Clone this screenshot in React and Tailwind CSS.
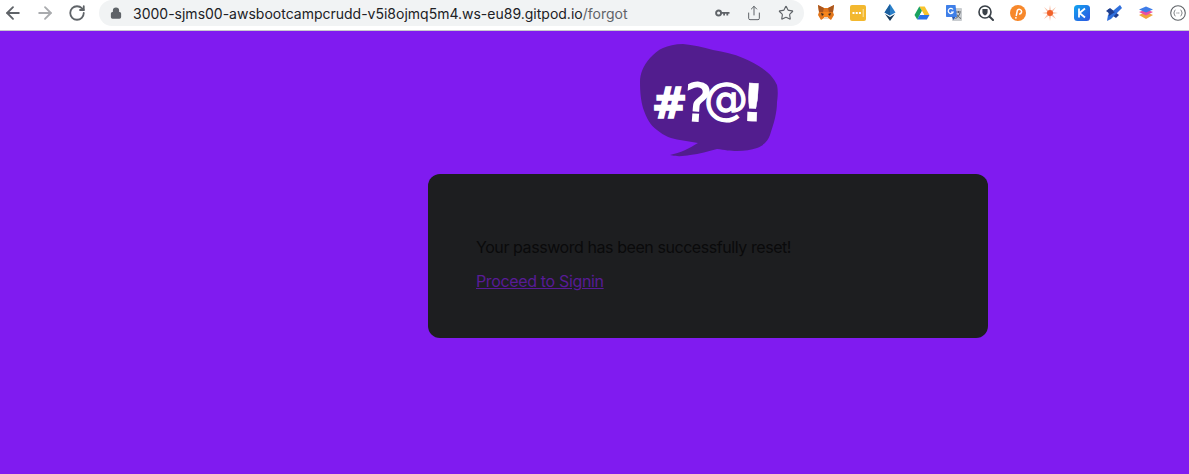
import { ArrowLeft, ArrowRight, RotateCw, Lock, Share, Star } from "lucide-react";

function Logo() {
  const glyph = "font-['DejaVu_Sans',sans-serif] fill-white stroke-white";
  return (
    <svg width="140" height="116" viewBox="0 0 140 116" className="ml-[4px]">
      <path
        d="M10 15 C3 23 0 31 0 39 C0 50 1 58 3 65 C7 76 10 82 17 87 C24 93 32 96 40 97 L58 100 C50 105 40 110 30 112 C38 114 44 113 50 112 C60 111 68 108 77 106 C85 107 90 108 97 108 C105 108 111 107 117 105 C124 102 128 98 130 92 C134 80 137 70 137 59 C138 52 138 47 137 42 C134 36 131 32 127 29 C120 23 112 19 103 15 C94 11 84 9 73 7 C63 4 53 2 43 1 C35 1 28 3 23 5 C18 7 14 11 10 15 Z"
        fill="#521d8e"
      />
      <text x="12" y="75" fontSize="42" fontWeight="700" strokeWidth="1.6" className={glyph}>#</text>
      <text x="44" y="78" fontSize="52" strokeWidth="1.6" className={glyph} transform="rotate(4 58 58)">?</text>
      <text x="64" y="71" fontSize="44" strokeWidth="1.2" className={glyph}>@</text>
      <text x="101" y="78" fontSize="52" fontWeight="700" strokeWidth="0.4" className={glyph} transform="rotate(3 112 57)">!</text>
    </svg>
  );
}

function KeyIcon() {
  return (
    <svg width="15" height="8" viewBox="0 0 15 8" fill="none">
      <circle cx="3.6" cy="4" r="2.5" stroke="#5f6368" strokeWidth="1.9" />
      <path d="M6 2.9H14.5V4.8H13.2V6.4H11.4V4.8H10V6.4H8.2V4.8H6Z" fill="#5f6368" />
    </svg>
  );
}

function Fox() {
  return (
    <svg width="18" height="17" viewBox="0 0 18 17">
      <path d="M1 1L7 4H11L17 1L16 8L17 11L14 16L11 14H7L4 16L1 11L2 8Z" fill="#e2761b" />
      <path d="M1 1L7 4L6 8L2 8Z" fill="#a9561f" />
      <path d="M17 1L11 4L12 8L16 8Z" fill="#a9561f" />
      <path d="M6 8H12L11 14H7Z" fill="#f6851b" />
      <path d="M7 13H11V15H7Z" fill="#e8d9c9" />
      <path d="M4 9L7 10L5 12Z M14 9L11 10L13 12Z" fill="#3b2a20" />
    </svg>
  );
}

function Dots() {
  return (
    <svg width="16" height="16" viewBox="0 0 16 16">
      <rect width="16" height="16" rx="2" fill="#f3b82f" />
      <rect x="2.5" y="7" width="2" height="2" fill="#fff" />
      <rect x="5.7" y="7" width="2" height="2" fill="#fff" />
      <rect x="8.9" y="7" width="2" height="2" fill="#fff" />
      <rect x="12.7" y="4" width="1" height="8" fill="#fbe3a5" />
    </svg>
  );
}

function Eth() {
  return (
    <svg width="12" height="17" viewBox="0 0 12 17">
      <path d="M6 0L11.5 8.5L6 11.5L0.5 8.5Z" fill="#2a7fc9" />
      <path d="M6 0V11.5L0.5 8.5Z" fill="#1c5f9e" />
      <path d="M1 10L6 13L11 10L6 17Z" fill="#173a5c" />
    </svg>
  );
}

function Drive() {
  return (
    <svg width="16" height="14" viewBox="0 0 16 14">
      <path d="M5.3 0.5H10.7L15.5 9H10.2Z" fill="#f8c32c" />
      <path d="M5.3 0.5L0.5 9L3.2 13.5L8 5Z" fill="#1aa260" />
      <path d="M3.2 13.5H12.8L15.5 9H5.8Z" fill="#2a71e8" />
      <path d="M8 5L10.2 9H5.8Z" fill="#fff" />
    </svg>
  );
}

function Translate() {
  return (
    <svg width="16" height="16" viewBox="0 0 16 16">
      <rect x="6" y="3" width="10" height="13" rx="1" fill="#c9ccd0" />
      <path d="M10 7H15M12.5 6V8M14 8C13 11 11.5 12.5 9.5 13.5M11 9.5C12 11.5 13 12.5 15 13.5" stroke="#5f6368" strokeWidth="1" fill="none" />
      <path d="M1 0H9.5L11 12H1C0.4 12 0 11.6 0 11V1C0 0.4 0.4 0 1 0Z" fill="#3f7fe8" />
      <path d="M7 4.5A2.6 2.6 0 1 0 7.2 7H5" stroke="#fff" strokeWidth="1.2" fill="none" />
      <path d="M6 12H9.5L7.5 15Z" fill="#2b58b0" />
    </svg>
  );
}

function ShieldSearch() {
  return (
    <svg width="16" height="16" viewBox="0 0 16 16" fill="none">
      <circle cx="7" cy="7" r="6" stroke="#3a4148" strokeWidth="1.6" />
      <path d="M4.4 4H9.6V7C9.6 8.8 8.2 10 7 10.6C5.8 10 4.4 8.8 4.4 7Z" fill="#3a4148" />
      <path d="M11.5 11.5L15 15" stroke="#3a4148" strokeWidth="2" strokeLinecap="round" />
    </svg>
  );
}

function Polka() {
  return (
    <svg width="16" height="16" viewBox="0 0 16 16" fill="none">
      <circle cx="8" cy="8" r="8" fill="#f7882b" />
      <path d="M6.2 11L7.3 5.5A2.3 2.3 0 1 1 9 9" stroke="#fff" strokeWidth="1.5" />
      <circle cx="5.9" cy="12.8" r="0.9" fill="#fff" />
    </svg>
  );
}

function Spark() {
  return (
    <svg width="16" height="16" viewBox="0 0 16 16">
      <path d="M8 0L9 6L14 2L10.5 7L16 8L10.5 9L14 14L9 10.5L8 16L7 10.5L2 14L5.5 9L0 8L5.5 7L2 2L7 6Z" fill="#f9bfa8" />
      <circle cx="8" cy="8" r="3" fill="#f2622a" />
    </svg>
  );
}

function KBadge() {
  return (
    <svg width="16" height="16" viewBox="0 0 16 16">
      <defs>
        <linearGradient id="kb" x1="0" y1="0" x2="1" y2="1">
          <stop offset="0" stopColor="#12a4f0" />
          <stop offset="1" stopColor="#2c55e0" />
        </linearGradient>
      </defs>
      <rect width="16" height="16" rx="3.5" fill="url(#kb)" />
      <path d="M5 3.5V12.5M11 3.5L5.5 8L11 12.5" stroke="#fff" strokeWidth="1.8" fill="none" />
    </svg>
  );
}

function Cross() {
  return (
    <svg width="16" height="16" viewBox="0 0 16 16">
      <path d="M0 6L4 3L13 10L10 13Z" fill="#1f3f8f" />
      <path d="M14 0L16 3L5 14L1 16L2 10Z" fill="#2f6fdc" />
      <path d="M2 4L9 7L3 11Z" fill="#1f3f8f" />
    </svg>
  );
}

function Layers() {
  return (
    <svg width="16" height="14" viewBox="0 0 16 14">
      <path d="M1 9L8 6L15 9L8 13Z" fill="#f0a33c" />
      <path d="M1 6L8 3.5L15 6L8 9.5Z" fill="#ea4fa0" />
      <path d="M1 3.5L8 0.5L15 3.5L8 6.5Z" fill="#3f7de8" />
    </svg>
  );
}

function CodeCircle() {
  return (
    <svg width="16" height="16" viewBox="0 0 16 16" fill="none">
      <circle cx="8" cy="8" r="7.3" stroke="#5f6368" strokeWidth="1.1" />
      <path d="M5.4 5C4.3 5 4.6 7.7 3.6 8C4.6 8.3 4.3 11 5.4 11M10.6 5C11.7 5 11.4 7.7 12.4 8C11.4 8.3 11.7 11 10.6 11" stroke="#5f6368" strokeWidth="0.9" />
      <path d="M6.5 8H9.5" stroke="#5f6368" strokeWidth="0.9" strokeDasharray="1 0.8" />
    </svg>
  );
}

const extensions = [Fox, Dots, Eth, Drive, Translate, ShieldSearch, Polka, Spark, KBadge, Cross, Layers, CodeCircle];

export default function App() {
  return (
    <div className="h-[474px] w-[1189px] overflow-hidden bg-[#801bf0] font-['Inter',sans-serif]">
      {/* Browser toolbar */}
      <div className="flex h-[31px] items-start border-b border-[#c8c8ce] bg-white">
        <div className="flex h-[25px] shrink-0 items-center gap-[12px] pl-[3px]">
          <ArrowLeft size={20} strokeWidth={2.2} className="text-[#5f6368]" />
          <ArrowRight size={20} strokeWidth={2.2} className="text-[#a9abae]" />
          <RotateCw size={18} strokeWidth={2.4} className="ml-[1px] text-[#5f6368]" />
        </div>
        <div className="ml-[13px] flex h-[26px] w-[705px] shrink-0 items-center rounded-[13px] bg-[#f1f3f4] pl-[11px] pr-[10px]">
          <Lock size={12} strokeWidth={2.5} className="fill-[#5f6368] text-[#5f6368]" />
          <span className="ml-[11px] text-[14px] text-[#202124]">
            3000-sjms00-awsbootcampcrudd-v5i8ojmq5m4.ws-eu89.gitpod.io<span className="text-[#5f6368]">/forgot</span>
          </span>
          <div className="ml-auto flex items-center gap-[16px]">
            <KeyIcon />
            <Share size={16} strokeWidth={1.5} className="text-[#5f6368]" />
            <Star size={16} strokeWidth={1.7} className="text-[#5f6368]" />
          </div>
        </div>
        <div className="ml-[6px] flex h-[25px] shrink-0 items-center">
          {extensions.map((Icon, i) => (
            <div key={i} className="flex w-[32px] items-center justify-center">
              <Icon />
            </div>
          ))}
        </div>
      </div>

      {/* Confirmation form */}
      <div className="ml-[428px] flex w-[560px] flex-col items-center pt-[12px]">
        <Logo />
        <div className="mt-[15px] flex h-[164px] w-full flex-col gap-[10px] rounded-xl bg-[#1d1e20] pl-[48px] pt-[61px] text-[16px] leading-6">
          <p className="tracking-[-0.43px] text-[#0a0a0b]">Your password has been successfully reset!</p>
          <a href="#signin" className="tracking-[-0.35px] text-[#581b96] underline">Proceed to Signin</a>
        </div>
      </div>
    </div>
  );
}
